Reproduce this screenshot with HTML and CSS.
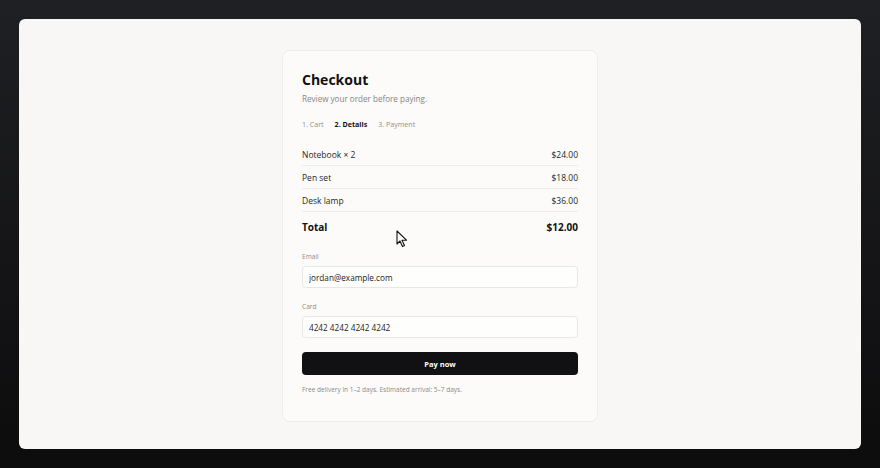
FILE: index.html
```html
<!DOCTYPE html>
<html lang="en">
<head>
    <meta charset="UTF-8">
    <meta name="viewport" content="width=device-width, initial-scale=1.0">
    <title>Checkout</title>
    <link rel="stylesheet" href="styles.css">
</head>
<body>
    <div class="frame">
        <div class="card">
            <h1>Checkout</h1>
            <p class="subtitle">Review your order before paying.</p>
            <div class="steps">
                <span>1. Cart</span>
                <span class="active">2. Details</span>
                <span>3. Payment</span>
            </div>
            <div class="items">
                <div class="row"><span>Notebook × 2</span><span>$24.00</span></div>
                <div class="row"><span>Pen set</span><span>$18.00</span></div>
                <div class="row"><span>Desk lamp</span><span>$36.00</span></div>
                <div class="row total"><span>Total</span><span>$12.00</span></div>
            </div>
            <div class="field">
                <label for="email">Email</label>
                <input type="text" id="email" value="jordan@example.com">
            </div>
            <div class="field">
                <label for="card">Card</label>
                <input type="text" id="card" value="4242 4242 4242 4242">
            </div>
            <button class="pay">Pay now</button>
            <p class="note">Free delivery in 1–2 days. Estimated arrival: 5–7 days.</p>
        </div>
    </div>

    <!-- mouse pointer captured in the screenshot -->
    <svg class="cursor" width="12" height="18" viewBox="0 0 12 18">
        <path d="M1 1 L1 14 L4 11 L6.5 16.5 L8.5 15.6 L6 10.2 L10.5 10.2 Z" fill="#fff" stroke="#111" stroke-width="1.1" stroke-linejoin="round"/>
    </svg>
</body>
</html>
```

FILE: styles.css
```css
html, body {
    margin: 0;
    height: 100%;
}
body {
    font-family: 'Open Sans', 'Liberation Sans', sans-serif;
    color: #161616;
    background: linear-gradient(180deg, #1f2023 0%, #141416 60%, #0c0c0d 100%);
    padding: 19px;
    box-sizing: border-box;
    position: relative;
}
.frame {
    height: 430px;
    background-color: #f8f7f5;
    border-radius: 6px;
    display: flex;
    justify-content: center;
    align-items: flex-start;
    padding-top: 31px;
    box-sizing: border-box;
}
.card {
    width: 316px;
    box-sizing: border-box;
    padding: 19px 19px 26px;
    background-color: #fcfbfa;
    border: 1px solid #efedea;
    border-radius: 8px;
}
h1 {
    margin: 0;
    font-size: 14px;
    line-height: 20px;
    font-weight: 700;
    color: #111;
}
.subtitle {
    margin: 2px 0 0;
    font-size: 8.1px;
    line-height: 14px;
    color: #858585;
}
.steps {
    display: flex;
    gap: 11px;
    margin-top: 12px;
    font-size: 7.1px;
    line-height: 12px;
    color: #8f8f8f;
}
.steps .active {
    color: #111;
    font-weight: 700;
}
.items {
    margin-top: 13px;
}
.row {
    display: flex;
    justify-content: space-between;
    align-items: center;
    height: 22px;
    border-bottom: 1px solid #eeece9;
    font-size: 8.5px;
    color: #262626;
}
.row.total {
    height: 30px;
    border-bottom: none;
    font-size: 10px;
    font-weight: 700;
    color: #111;
}
.field {
    margin-top: 10px;
}
.field + .field {
    margin-top: 14px;
}
label {
    display: block;
    font-size: 6.6px;
    line-height: 10px;
    color: #8c8c8c;
    margin-bottom: 4px;
}
input {
    display: block;
    width: 100%;
    height: 22px;
    box-sizing: border-box;
    padding: 0 6px;
    border: 1px solid #e9e7e4;
    border-radius: 4px;
    background-color: #fefefd;
    font-family: inherit;
    font-size: 8.2px;
    color: #1a1a1a;
    outline: none;
}
.pay {
    display: block;
    width: 100%;
    height: 23px;
    margin-top: 14px;
    border: none;
    border-radius: 4px;
    background-color: #111113;
    color: #fff;
    font-family: inherit;
    font-size: 7.5px;
    font-weight: 700;
}
.note {
    margin: 10px 0 0;
    font-size: 6.5px;
    line-height: 10px;
    color: #8a8a8a;
}
.cursor {
    position: absolute;
    left: 396px;
    top: 230px;
}
```
